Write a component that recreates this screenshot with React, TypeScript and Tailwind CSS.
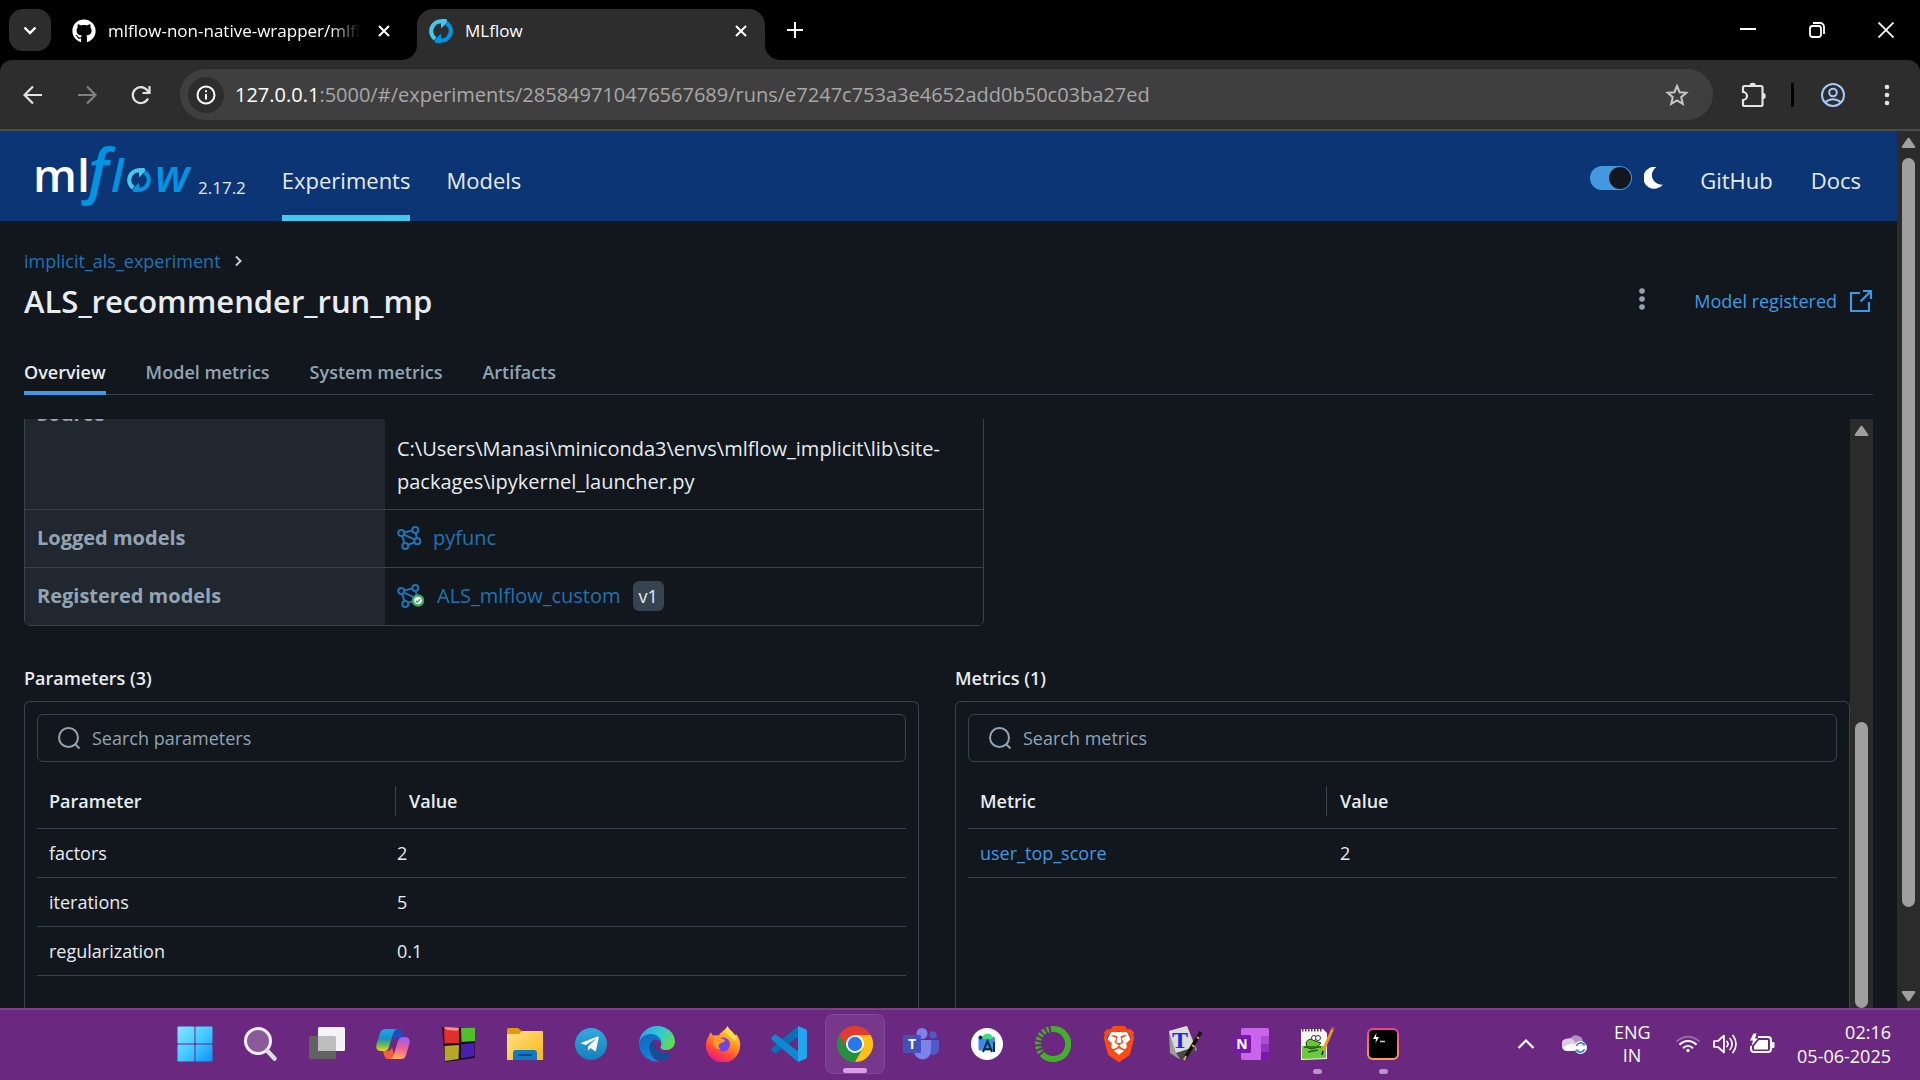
import React from "react";
import { FaGithub, FaTelegramPlane } from "react-icons/fa";
import { SiBrave } from "react-icons/si";

type IconProps = { className?: string };

/* ---------- shared marks ---------- */

/* Two half rings, each ending in an arrow head, in a 24 unit box. */
function RingShapes() {
  return (
    <g fill="none" strokeWidth="4.200">
      <path d="M6.200 19.800A9.700 9.700 0 0 1 12.500 2.300" stroke="#43c9ed" />
      <path d="M12 0h5.500l1 3-6.500 6.500z" fill="#43c9ed" />
      <path d="M17.800 4.200A9.700 9.700 0 0 1 11.500 21.700" stroke="#0194e2" />
      <path d="M12 24H6.500l-1-3 6.500-6.500z" fill="#0194e2" />
    </g>
  );
}

function FlowRing({ className }: IconProps) {
  return (
    <svg viewBox="0 0 24 24" className={className} aria-hidden="true">
      <RingShapes />
    </svg>
  );
}

function MlflowLogo() {
  return (
    <svg width="162" height="68" viewBox="0 0 162 68" className="overflow-visible" role="img" aria-label="mlflow">
      <g fontFamily="'Open Sans', sans-serif" fontWeight="600">
        <text x="-3" y="50" fontSize="46" fill="#fff">ml</text>
        <g fill="#0194e2" fontStyle="italic">
          <text x="52" y="50" fontSize="60">f</text>
          <text x="75" y="50" fontSize="46">l</text>
          <text x="119" y="50" fontSize="46">w</text>
        </g>
      </g>
      <g transform="translate(91 26)">
        <RingShapes />
      </g>
    </svg>
  );
}

function ModelIcon({ registered }: { registered?: boolean }) {
  return (
    <svg width="28" height="24" viewBox="0 0 28 24" fill="none" className="shrink-0 overflow-visible" aria-hidden="true">
      <g stroke="#2272b4" strokeWidth="2">
        <circle cx="4.300" cy="7" r="3" />
        <circle cx="18.300" cy="4" r="3" />
        <circle cx="20.300" cy="15.300" r="3" />
        <circle cx="8.300" cy="20" r="3" />
        <path d="M7.200 6.400 15.400 4.600M18.800 7l1 5.300M5.200 9.900l2.200 7.200M11 18.900l6.600-2.600M6.900 8.600l11 5" />
      </g>
      {registered && (
        <g>
          <circle cx="21" cy="16.500" r="5" fill="#fff" stroke="#3caa60" strokeWidth="2.400" />
          <path d="m18.800 16.800 1.400 1.400 3-3" stroke="#3caa60" strokeWidth="1.600" />
        </g>
      )}
    </svg>
  );
}

function SearchIcon() {
  return (
    <svg width="24" height="24" viewBox="0 0 24 24" fill="none" stroke="#92a4b3" strokeWidth="2" aria-hidden="true">
      <circle cx="11.500" cy="11.500" r="9.500" />
      <path d="m18 18 4.500 4.500" />
    </svg>
  );
}

/* ---------- browser chrome ---------- */

function CloseIcon() {
  return (
    <svg width="12" height="12" viewBox="0 0 12 12" stroke="#fff" strokeWidth="2" aria-hidden="true">
      <path d="m1 1 10 10M11 1 1 11" />
    </svg>
  );
}

function TabStrip() {
  return (
    <div className="flex h-[60px] shrink-0 items-end bg-black text-[17px] text-white">
      <button aria-label="Search tabs" className="mb-[9px] ml-[9px] flex h-[42px] w-[42px] items-center justify-center rounded-[14px] bg-[#2d2d2d]">
        <svg width="14" height="9" viewBox="0 0 14 9" fill="none" stroke="#fff" strokeWidth="2.400"><path d="m1.500 1.500 5.500 5.500 5.500-5.500" /></svg>
      </button>
      <div className="flex h-[51px] w-[366px] items-center pr-[27px] pb-2 pl-[21px]">
        <FaGithub className="size-6 shrink-0" />
        <span className="ml-3 w-[252px] overflow-hidden whitespace-nowrap [mask-image:linear-gradient(to_right,black_88%,transparent)]">mlflow-non-native-wrapper/mlflow</span>
        <button aria-label="Close tab" className="ml-auto"><CloseIcon /></button>
      </div>
      <div className="relative flex h-[51px] w-[348px] items-center rounded-t-2xl bg-[#2d2d2d] px-3 pb-2">
        <svg width="15" height="15" viewBox="0 0 15 15" className="absolute bottom-0 -left-[15px]" aria-hidden="true"><path d="M15 0v15H0A15 15 0 0 0 15 0z" fill="#2d2d2d" /></svg>
        <svg width="15" height="15" viewBox="0 0 15 15" className="absolute -right-[15px] bottom-0" aria-hidden="true"><path d="M0 0v15h15A15 15 0 0 1 0 0z" fill="#2d2d2d" /></svg>
        <FlowRing className="size-6" />
        <span className="ml-3">MLflow</span>
        <button aria-label="Close tab" className="mr-1.5 ml-auto"><CloseIcon /></button>
      </div>
      <button aria-label="New tab" className="mb-[22px] ml-[22px]">
        <svg width="16" height="16" viewBox="0 0 16 16" stroke="#fff" strokeWidth="2"><path d="M8 0v16M0 8h16" /></svg>
      </button>
      <div className="ml-auto flex h-full">
        <button aria-label="Minimize" className="flex w-[69px] items-center justify-center">
          <svg width="16" height="16" viewBox="0 0 16 16" stroke="#fff" strokeWidth="2"><path d="M0 7h16" /></svg>
        </button>
        <button aria-label="Restore" className="flex w-[69px] items-center justify-center">
          <svg width="16" height="16" viewBox="0 0 16 16" fill="none" stroke="#fff" strokeWidth="1.800"><rect x="1" y="4" width="11" height="11" rx="2.500" /><path d="M4 1h7a4 4 0 0 1 4 4v7" /></svg>
        </button>
        <button aria-label="Close" className="flex w-[69px] items-center justify-center">
          <svg width="16" height="16" viewBox="0 0 16 16" stroke="#fff" strokeWidth="1.800"><path d="m.5.5 15 15M15.500.5l-15 15" /></svg>
        </button>
      </div>
    </div>
  );
}

function AddressBar() {
  return (
    <div className="shrink-0 bg-black">
      <div className="flex h-[71px] items-center rounded-t-xl border-b-2 border-[#4c4c4c] bg-[#2d2d2d] text-[#dedede]">
        <div className="flex w-[180px] items-center gap-[34px] pl-[23px]">
          <button aria-label="Back"><svg width="20" height="20" viewBox="0 0 20 20" fill="none" stroke="#e3e3e3" strokeWidth="2.200"><path d="M19 10H2M10 1.500 1.500 10l8.500 8.500" /></svg></button>
          <button aria-label="Forward"><svg width="20" height="20" viewBox="0 0 20 20" fill="none" stroke="#808080" strokeWidth="2.200"><path d="M1 10h17M10 1.500l8.500 8.500-8.500 8.500" /></svg></button>
          <button aria-label="Reload"><svg width="20" height="20" viewBox="0 0 20 20" fill="none" stroke="#e3e3e3" strokeWidth="2.200"><path d="M17 13.500A8 8 0 1 1 16 5l2 2.500" /><path d="M18.500 1v7h-7" /></svg></button>
        </div>
        <div className="flex h-[51px] flex-1 items-center rounded-full bg-[#3f3f3f] pr-6 pl-2">
          <button aria-label="Site information" className="flex size-9 items-center justify-center rounded-full bg-[#2d2d2d]">
            <svg width="20" height="20" viewBox="0 0 20 20" fill="none" stroke="#fff" strokeWidth="2"><circle cx="10" cy="10" r="8.500" /><path d="M10 9v5.500M10 5.200v2" /></svg>
          </button>
          <div className="ml-[11px] flex-1 text-xl whitespace-nowrap text-[#a8a8a8]"><span className="text-white">127.0.0.1</span>:5000/#/experiments/285849710476567689/runs/e7247c753a3e4652add0b50c03ba27ed</div>
          <button aria-label="Bookmark this page">
            <svg width="24" height="24" viewBox="0 0 24 24" fill="none" stroke="#c7c7c7" strokeWidth="2"><path d="m12 3 2.600 6.200 6.700.6-5.100 4.400 1.600 6.600L12 17.300l-5.800 3.500 1.600-6.600-5.100-4.400 6.700-.6z" /></svg>
          </button>
        </div>
        <div className="flex w-[207px] items-center">
          <button aria-label="Extensions" className="ml-7">
            <svg width="26" height="26" viewBox="0 0 26 26" fill="none" stroke="#e3e3e3" strokeWidth="2.200"><path d="M2 5.500A1.500 1.500 0 0 1 3.500 4H20a1.500 1.500 0 0 1 1.500 1.500v17A1.500 1.500 0 0 1 20 24H3.500A1.500 1.500 0 0 1 2 22.500V18a4 4 0 0 0 0-8z" /><path d="M8.500 4a3.200 3.200 0 0 1 6.400 0zM21.500 10.800a3.200 3.200 0 0 1 0 6.400z" fill="#e3e3e3" stroke="none" /></svg>
          </button>
          <span className="ml-6 h-6 w-[3px] bg-black" />
          <button aria-label="Profile" className="ml-[26px]">
            <svg width="26" height="26" viewBox="0 0 26 26" fill="none" stroke="#a8c7fa" strokeWidth="2"><circle cx="13" cy="13" r="11" /><circle cx="13" cy="10.500" r="3.800" /><path d="M5 20.500c4.500-4.500 11.500-4.500 16 0" /></svg>
          </button>
          <button aria-label="Chrome menu" className="ml-[38px]">
            <svg width="6" height="22" viewBox="0 0 6 22" fill="#e3e3e3"><circle cx="3" cy="3" r="2.300" /><circle cx="3" cy="11" r="2.300" /><circle cx="3" cy="19" r="2.300" /></svg>
          </button>
        </div>
      </div>
    </div>
  );
}

/* ---------- MLflow page ---------- */

function AppHeader() {
  return (
    <header className="flex h-[90px] shrink-0 items-stretch bg-[#0b3574] pr-9 pl-9 text-[22px] text-[#e8ecf0]">
      <a href="#home" className="flex items-center">
        <MlflowLogo />
        <span className="mt-6 text-[17px]">2.17.2</span>
      </a>
      <nav className="ml-9 flex gap-9">
        <a href="#experiments" className="flex items-center border-b-[6px] border-[#43c9ed] pt-3.5">Experiments</a>
        <a href="#models" className="flex items-center border-b-[6px] border-transparent pt-3.5">Models</a>
      </nav>
      <div className="ml-auto flex items-center pt-2">
        <button role="switch" aria-checked="true" aria-label="Dark mode" className="mb-1 flex h-6 w-[42px] items-center justify-end rounded-full bg-[#4299e0] pr-px">
          <span className="size-[22px] rounded-full bg-[#11171d]" />
        </button>
        <svg width="20" height="22" viewBox="0 0 20 22" className="mb-1 ml-3" aria-hidden="true"><path d="M12.500 0A11 11 0 1 0 19 17.500 9.500 9.500 0 0 1 12.500 0z" fill="#fff" /></svg>
        <a href="#github" className="ml-9">GitHub</a>
        <a href="#docs" className="ml-[38px]">Docs</a>
      </div>
    </header>
  );
}

function ScrollArrow({ down }: { down?: boolean }) {
  return (
    <svg width="15" height="12" viewBox="0 0 15 12" className={down ? "rotate-180" : ""} aria-hidden="true">
      <path d="M6.300 1.500a1.500 1.500 0 0 1 2.400 0l5.500 8a1 1 0 0 1-.9 1.500H1.700a1 1 0 0 1-.9-1.500z" fill="#9f9f9f" />
    </svg>
  );
}

function RunHeader() {
  return (
    <div className="shrink-0">
      <div className="flex items-center gap-3.5 text-lg leading-6 text-[#2272b4]">
        <a href="#experiment">implicit_als_experiment</a>
        <svg width="7" height="12" viewBox="0 0 7 12" fill="none" stroke="#c0cdd8" strokeWidth="2" aria-hidden="true"><path d="m1 1.500 4.500 4.500L1 10.500" /></svg>
      </div>
      <div className="mt-1 flex h-12 items-center">
        <h1 className="text-[31px] leading-10 font-semibold text-[#e8ecf0]">ALS_recommender_run_mp</h1>
        <button aria-label="Run actions" className="mr-[49px] mb-1 ml-auto">
          <svg width="6" height="22" viewBox="0 0 6 22" fill="#92a4b3"><circle cx="3" cy="3" r="2.800" /><circle cx="3" cy="11" r="2.800" /><circle cx="3" cy="19" r="2.800" /></svg>
        </button>
        <a href="#registered" className="flex items-center gap-3 text-lg text-[#4299e0]">
          Model registered
          <svg width="24" height="24" viewBox="0 0 24 24" fill="none" stroke="#4299e0" strokeWidth="2.200" aria-hidden="true"><path d="M11 4H2v18h18v-9M14 2h8v8M22 2 11.500 12.500" /></svg>
        </a>
      </div>
      <nav className="mt-[30px] flex gap-10 border-b border-[#37444f] text-lg font-semibold text-[#92a4b3]">
        <a href="#overview" className="-mb-px border-b-4 border-[#4299e0] pt-[5px] pb-[7px] leading-6 text-[#e8ecf0]">Overview</a>
        <a href="#model-metrics" className="pt-[5px] leading-6">Model metrics</a>
        <a href="#system-metrics" className="pt-[5px] leading-6">System metrics</a>
        <a href="#artifacts" className="pt-[5px] leading-6">Artifacts</a>
      </nav>
    </div>
  );
}

function DetailRow({ label, children }: { label: string; children: React.ReactNode }) {
  return (
    <tr className="h-[58px] border-b border-[#37444f]">
      <th scope="row" className="w-[360px] bg-[#20272e] px-3 text-left font-bold text-[#92a4b3]">{label}</th>
      <td className="px-3">{children}</td>
    </tr>
  );
}

function RunDetails() {
  return (
    <div className="-mt-6 w-[960px] shrink-0 overflow-hidden rounded-md border border-b-0 border-[#37444f]">
      <table className="w-full border-collapse text-xl">
        <tbody>
          <tr className="h-[113px] border-b border-[#37444f]">
            <th scope="row" className="w-[360px] bg-[#20272e] px-3 pt-1 text-left align-top leading-7 font-bold text-[#92a4b3]">Source</th>
            <td className="px-3 pt-9 align-top leading-[33px] text-[#e8ecf0]">C:\Users\Manasi\miniconda3\envs\mlflow_implicit\lib\site-<br />packages\ipykernel_launcher.py</td>
          </tr>
          <DetailRow label="Logged models">
            <a href="#pyfunc" className="flex items-center gap-2 text-[#2272b4]"><ModelIcon />pyfunc</a>
          </DetailRow>
          <DetailRow label="Registered models">
            <span className="flex items-center gap-3">
              <a href="#model" className="flex items-center gap-3 text-[#2272b4]"><ModelIcon registered />ALS_mlflow_custom</a>
              <span className="rounded-md bg-[#37444f] px-1.5 text-lg leading-[30px] text-[#e8ecf0]">v1</span>
            </span>
          </DetailRow>
        </tbody>
      </table>
    </div>
  );
}

type Entry = { name: string; value: string; link?: boolean };

function DataCard({ title, column, placeholder, rows }: { title: string; column: string; placeholder: string; rows: Entry[] }) {
  return (
    <section className="flex min-w-0 flex-1 flex-col">
      <h2 className="text-lg leading-[30px] font-semibold text-[#e8ecf0]">{title}</h2>
      <div className="mt-2 flex-1 rounded-t-md border border-b-0 border-[#37444f] p-3 text-lg leading-6 text-[#e8ecf0]">
        <label className="flex h-12 items-center gap-[11px] rounded-md border border-[#37444f] px-[19px]">
          <SearchIcon />
          <input type="text" aria-label={placeholder} placeholder={placeholder} className="min-w-0 flex-1 bg-transparent outline-none placeholder:text-[#92a4b3]" />
        </label>
        <table className="mt-[13px] w-full table-fixed border-collapse">
          <thead>
            <tr className="h-[54px] border-b border-[#37444f] text-left">
              <th scope="col" className="w-[347px] px-3 font-semibold">{column}</th>
              <th scope="col" className="pl-[11px] font-semibold"><span className="block border-l border-[#37444f] pl-[13px] leading-[30px]">Value</span></th>
            </tr>
          </thead>
          <tbody>
            {rows.map((row) => (
              <tr key={row.name} className="h-[49px] border-b border-[#37444f]">
                <td className="px-3">{row.link ? <a href="#metric" className="text-[#4299e0]">{row.name}</a> : row.name}</td>
                <td className={row.link ? "pl-[25px]" : "pl-[13px]"}>{row.value}</td>
              </tr>
            ))}
          </tbody>
        </table>
      </div>
    </section>
  );
}

function RunPage() {
  return (
    <main className="flex min-h-0 flex-1 flex-col px-6 pt-7">
      <RunHeader />
      <div className="mt-6 flex min-h-0 flex-1">
        <div className="flex min-w-0 flex-1 flex-col overflow-hidden">
          <RunDetails />
          <div className="mt-[37px] flex flex-1 gap-9">
            <DataCard title="Parameters (3)" column="Parameter" placeholder="Search parameters" rows={[{ name: "factors", value: "2" }, { name: "iterations", value: "5" }, { name: "regularization", value: "0.1" }]} />
            <DataCard title="Metrics (1)" column="Metric" placeholder="Search metrics" rows={[{ name: "user_top_score", value: "2", link: true }]} />
          </div>
        </div>
        <div className="flex w-[23px] shrink-0 flex-col items-center justify-between bg-[#2b2b2b] pt-1.5">
          <ScrollArrow />
          <div className="h-[49%] w-[13px] rounded-full bg-[#9f9f9f]" />
        </div>
      </div>
    </main>
  );
}

/* ---------- taskbar ---------- */

function StartIcon() {
  return (
    <svg width="36" height="36" viewBox="0 0 36 36">
      <defs><linearGradient id="start" gradientUnits="userSpaceOnUse" x1="0" y1="0" x2="36" y2="36"><stop stopColor="#8ae3ff" /><stop offset=".5" stopColor="#45cbff" /><stop offset="1" stopColor="#0a90f8" /></linearGradient></defs>
      <g fill="url(#start)"><rect x=".5" y=".5" width="17" height="17" rx="1" /><rect x="18.500" y=".5" width="17" height="17" rx="1" /><rect x=".5" y="18.500" width="17" height="17" rx="1" /><rect x="18.500" y="18.500" width="17" height="17" rx="1" /></g>
    </svg>
  );
}

function FindIcon() {
  return (
    <svg width="36" height="36" viewBox="0 0 36 36" fill="none">
      <circle cx="15" cy="15" r="12.500" fill="#8a5a9b" stroke="#f2f0f3" strokeWidth="3" />
      <path d="m24 24.500 7.500 8" stroke="#d9dce2" strokeWidth="4.500" strokeLinecap="round" />
    </svg>
  );
}

function TaskViewIcon() {
  return (
    <svg width="36" height="36" viewBox="0 0 36 36">
      <rect x="0" y="10" width="27" height="23" rx="1.500" fill="#626262" />
      <rect x="9" y="1" width="27" height="24" rx="1.500" fill="#f4f4f4" />
      <path d="M9 10h16.500a1.500 1.500 0 0 1 1.500 1.500V25H10.500A1.500 1.500 0 0 1 9 23.500z" fill="#bdbdbd" />
    </svg>
  );
}

function CopilotIcon() {
  return (
    <svg width="36" height="36" viewBox="0 0 36 36">
      <defs>
        <linearGradient id="cpA" x1=".3" y1="0" x2=".3" y2="1"><stop stopColor="#18a6f0" /><stop offset=".45" stopColor="#1d8fb8" /><stop offset=".75" stopColor="#6fbf50" /><stop offset="1" stopColor="#f5d90a" /></linearGradient>
        <linearGradient id="cpB" x1=".6" y1="0" x2=".4" y2="1"><stop stopColor="#9b5cf0" /><stop offset=".5" stopColor="#ef5f95" /><stop offset="1" stopColor="#ffb35c" /></linearGradient>
      </defs>
      <path d="M16 3h7c2 0 3 1 3.600 3l1.500 5h-4c-3 0-4 1-5 4z" fill="#1b4fc4" />
      <path d="M20 33h-7c-2 0-3-1-3.500-3L8 25h4c3 0 4-1 5-4z" fill="#f4603a" />
      <path d="M10 3h13c-3 0-4 2-5 5l-4 13c-1 3-2.500 4-5 4H6c-4 0-5.500-3-4.400-7L5 7c1-3 2.500-4 5-4z" fill="url(#cpA)" />
      <path d="M26 33H14c3 0 4-2 5-5l4-13c1-3 2.500-4 5-4h2c4 0 5.500 3 4.400 7L31 29c-1 3-2.500 4-5 4z" fill="url(#cpB)" />
    </svg>
  );
}

function BlocksIcon() {
  return (
    <svg width="36" height="36" viewBox="0 0 36 36">
      <path d="M1 1 34 1.500V32L4 36z" fill="#1b0d20" />
      <path d="m3 1 15 .8V17L3.500 17.500z" fill="#e0302b" /><path d="m3 1 15 .8-1.500 3L6 4z" fill="#f5948e" />
      <path d="M20 1.800 34 1.500V15l-13.500 1z" fill="#4fc02c" />
      <path d="M3.500 20 18 19l-.5 14L4 35z" fill="#b8a824" /><path d="M20 18.500 33.500 17v13L20 32.500z" fill="#4b1fae" />
    </svg>
  );
}

function ExplorerIcon() {
  return (
    <svg width="36" height="36" viewBox="0 0 36 36">
      <defs><linearGradient id="folder" x1="0" y1="0" x2="1" y2="1"><stop stopColor="#ffe08a" /><stop offset="1" stopColor="#f9b80f" /></linearGradient></defs>
      <path d="M0 3.500A1.500 1.500 0 0 1 1.500 2H11l5 4-3 5H0z" fill="#dd9a09" />
      <path d="M0 8h12l3-3h20a1 1 0 0 1 1 1v28H0z" fill="url(#folder)" />
      <path d="M6 34v-7a3 3 0 0 1 3-3h18a3 3 0 0 1 3 3v7z" fill="#1279c4" />
      <path d="M11 29h14" stroke="#0a4c86" strokeWidth="2" />
    </svg>
  );
}

function TelegramIcon() {
  return (
    <span className="flex size-8 items-center justify-center rounded-full bg-gradient-to-b from-[#34a9e2] to-[#1480b9] text-white">
      <FaTelegramPlane className="mr-0.5 size-5" />
    </span>
  );
}

function EdgeIcon() {
  return (
    <svg width="36" height="36" viewBox="0 0 36 36">
      <defs>
        <linearGradient id="edA" x1="0" y1=".3" x2="1" y2=".7"><stop stopColor="#2aa5e8" /><stop offset=".5" stopColor="#33c8d0" /><stop offset="1" stopColor="#65dd4a" /></linearGradient>
        <linearGradient id="edB" x1="0" y1="0" x2=".5" y2="1"><stop stopColor="#0f67b8" /><stop offset="1" stopColor="#0d86e0" /></linearGradient>
      </defs>
      <path d="M0 18A18 18 0 0 1 18 0c10 0 18 7 18 15.500 0 5-4 8.500-9 8.500-4 0-6-1.500-5.500-3 1.500-2 1-6-1-8.500C15 6.500 4 8 0 18z" fill="url(#edA)" />
      <path d="M0 18C1 11 6 8 12 8c6 0 10 4 10.500 9-1-2-3-3.500-5.500-3.500-4 0-6.500 4-6.500 8.500 0 7 5 12 10 13.500A18 18 0 0 1 0 18z" fill="url(#edB)" />
      <path d="M14.500 14.500c-5 3-5 10-1 14.500 3 3.500 7 5.500 11 5.500 4-1.500 7-4.500 9-8-4 2-9 2-12.500-.5-5-3-7-7.500-6.500-11.500z" fill="#134f96" />
    </svg>
  );
}

function FirefoxIcon() {
  return (
    <svg width="36" height="36" viewBox="0 0 36 36">
      <defs>
        <linearGradient id="fx" x1=".8" y1="0" x2=".3" y2="1"><stop stopColor="#fff04a" /><stop offset=".4" stopColor="#ff9a20" /><stop offset=".75" stopColor="#ff4140" /><stop offset="1" stopColor="#e3158a" /></linearGradient>
      </defs>
      <path d="M6 6c.5 1.500 1 2.500 2 3.500 2-.5 4-.5 6 0C15 6 20 5 22.500 0c2 4.500 5 5 7 9l2-.5c3 4 4 8 3.500 12A17 17 0 0 1 1 19c0-3.500 1-6 2.500-8C4 9 5 7.500 6 6z" fill="url(#fx)" />
      <circle cx="18" cy="18.500" r="7" fill="#7542e5" />
      <path d="M8 11c3-2 7-1 9 2 2 0 3 .5 3 2-1 1.500-4 1.500-6 3.500-1 2 0 4 2 5-4 0-7-2-8-5.500z" fill="#ff9a2a" />
      <path d="M22.500 0c2 5 7 6 9 13l-2.500 2c-2-5-7-5-8-9z" fill="#ffe14a" />
    </svg>
  );
}

function CodeIcon() {
  return (
    <svg width="36" height="36" viewBox="0 0 36 36">
      <path d="M27 0v10.500L5.500 27c-1.500 1-2.500 0-4-1.500-1.500-1-1.500-2.500 0-4z" fill="#0b6fb3" />
      <path d="M27 36V25.500L5.500 9c-1.500-1-2.500 0-4 1.500-1.500 1-1.500 2.500 0 4z" fill="#0f88d2" />
      <path d="m27 0 8 3.500c.7.300 1 1 1 1.500v26c0 .6-.3 1.200-1 1.500L27 36z" fill="#25a5ef" />
    </svg>
  );
}

function ChromeIcon() {
  return (
    <svg width="36" height="36" viewBox="0 0 36 36">
      <circle cx="18" cy="18" r="18" fill="#e33b2e" />
      <path d="M2.400 9 10.200 22.500 18 27v9A18 18 0 0 1 2.400 9z" fill="#23913f" />
      <path d="M25.800 22.500 18 36l-7-13z" fill="#23913f" />
      <path d="M25.800 22.500 18 36a18 18 0 0 0 15.600-27H18z" fill="#fbc116" />
      <circle cx="18" cy="18" r="9" fill="#fff" /><circle cx="18" cy="18" r="7.200" fill="#2878ea" />
    </svg>
  );
}

function TeamsIcon() {
  return (
    <svg width="36" height="36" viewBox="0 0 36 36">
      <circle cx="30" cy="9" r="3.800" fill="#5059c9" /><path d="M26 14h10v9a6 6 0 0 1-8 5.500z" fill="#5059c9" />
      <circle cx="19" cy="7.500" r="5.500" fill="#7b83eb" /><path d="M11 14h17v11a8.500 8.500 0 0 1-17 0z" fill="#7b83eb" />
      <rect x="0" y="9" width="18" height="18" rx="1.500" fill="#4550bd" />
      <text x="9" y="23" textAnchor="middle" fontSize="14" fontWeight="700" fontFamily="'Open Sans', sans-serif" fill="#fff">T</text>
    </svg>
  );
}

function StudioIcon() {
  return (
    <svg width="36" height="36" viewBox="0 0 36 36">
      <circle cx="18" cy="18" r="16" fill="#fff" />
      <rect x="9.500" y="11" width="16.500" height="13.500" rx="1.500" fill="#4285f4" />
      <path d="M13 13a5.500 5.500 0 0 1 11 0z" fill="#3ddc84" /><circle cx="11.500" cy="11.500" r="2" fill="#073042" />
      <path d="m14 26 4.500-11L23 26M15.500 22.500c2 1 4 1 6 0" fill="none" stroke="#073042" strokeWidth="2" /><path d="M25 16v10" stroke="#073042" strokeWidth="2" />
    </svg>
  );
}

function AnacondaIcon() {
  return (
    <svg width="36" height="36" viewBox="0 0 36 36" fill="none" stroke="#43b02a" strokeWidth="6">
      <path d="M16 3.200A15 15 0 1 1 7 28" />
      <path d="M14 3.500A15 15 0 0 0 6 27" strokeDasharray="2.500 1.800" />
      <path d="M13 6.500A13 13 0 0 0 6.500 25" stroke="#6a2880" strokeWidth="1" strokeDasharray="2 2" />
    </svg>
  );
}

function BraveIcon() {
  return (
    <span className="relative flex size-9 items-center justify-center">
      <svg width="32" height="36" viewBox="0 0 32 36" className="absolute"><path d="M8 6h16l4 8-5 14-7 5-7-5L4 14z" fill="#fff" /></svg>
      <SiBrave className="relative size-9 text-[#fb4b14]" />
    </span>
  );
}

function WriterIcon() {
  return (
    <svg width="36" height="36" viewBox="0 0 36 36">
      <path d="m2 5 18-5 10 24-18 9-9-6z" fill="#9c9c9c" /><path d="m2 5 18-5 8 21-19 6z" fill="#dcdcdc" /><path d="m9 27 19-6v5l-15 7z" fill="#4a4a4a" />
      <text x="13" y="22" textAnchor="middle" fontSize="24" fontWeight="700" fontFamily="'Liberation Serif', serif" fill="#1a2bdc">T</text>
      <path d="m34 6-16 26" stroke="#17120a" strokeWidth="3.500" /><path d="m30 11 2 1.500M25 19l2 1.500M19 30l-2 4" stroke="#d2ae52" strokeWidth="2" />
    </svg>
  );
}

function OneNoteIcon() {
  return (
    <svg width="36" height="36" viewBox="0 0 36 36">
      <rect x="8" y="2" width="28" height="32" rx="2" fill="#ca64ea" /><path d="M28 10h8v8h-8z" fill="#ae4bd5" /><path d="M28 18h8v8h-8z" fill="#9332bf" /><path d="M28 26h8v6a2 2 0 0 1-2 2h-6z" fill="#7719aa" />
      <rect x="0" y="9" width="18" height="18" rx="1.500" fill="#7719aa" />
      <text x="9" y="23" textAnchor="middle" fontSize="14" fontWeight="700" fontFamily="'Open Sans', sans-serif" fill="#fff">N</text>
    </svg>
  );
}

function NotepadIcon() {
  return (
    <svg width="36" height="36" viewBox="0 0 36 36">
      <path d="M2 3h22l4 4v26L2 34z" fill="#f6f6f2" /><path d="M3 20h24v12L3 33z" fill="#6cc93e" />
      <path d="M3 4h20" stroke="#444" strokeWidth="3" strokeDasharray="1.500 1.500" />
      <path d="M7 17c1-4 6-5 9-2l6 2-3 3c-3 3-8 4-11 1z" fill="#68c92c" stroke="#1c3d10" /><circle cx="15" cy="12" r="2.500" fill="#fff" stroke="#333" /><circle cx="19" cy="12" r="2.500" fill="#fff" stroke="#333" />
      <path d="M5 21h17M9 26l10-2" stroke="#1c5c1c" strokeWidth="1.500" />
      <path d="M34 2 24 25" stroke="#e89a1c" strokeWidth="3" /><path d="m24 25-1 4" stroke="#222" strokeWidth="1.500" /><path d="m34.500 1-1 2.500" stroke="#b8435c" strokeWidth="3" />
    </svg>
  );
}

function TerminalIcon() {
  return (
    <svg width="36" height="36" viewBox="0 0 36 36">
      <defs><linearGradient id="term" x1="0" y1="0" x2="0" y2="1"><stop stopColor="#f0409a" /><stop offset="1" stopColor="#f9a34a" /></linearGradient></defs>
      <rect x="3" y="3" width="30" height="30" rx="5" fill="#000" stroke="url(#term)" strokeWidth="2" />
      <path d="M11.500 7 8 13h3l-.5 4L14 11h-3z" fill="#fff" /><path d="M15 15.500h5" stroke="#ccc" strokeWidth="1.500" />
    </svg>
  );
}

type TaskApp = { name: string; icon: React.ReactNode; state?: "active" | "open" };

const apps: TaskApp[] = [
  { name: "Start", icon: <StartIcon /> },
  { name: "Search", icon: <FindIcon /> },
  { name: "Task view", icon: <TaskViewIcon /> },
  { name: "Copilot", icon: <CopilotIcon /> },
  { name: "Blocks", icon: <BlocksIcon /> },
  { name: "File Explorer", icon: <ExplorerIcon /> },
  { name: "Telegram", icon: <TelegramIcon /> },
  { name: "Edge", icon: <EdgeIcon /> },
  { name: "Firefox", icon: <FirefoxIcon /> },
  { name: "Visual Studio Code", icon: <CodeIcon /> },
  { name: "Chrome", icon: <ChromeIcon />, state: "active" },
  { name: "Teams", icon: <TeamsIcon /> },
  { name: "Android Studio", icon: <StudioIcon /> },
  { name: "Anaconda", icon: <AnacondaIcon /> },
  { name: "Brave", icon: <BraveIcon /> },
  { name: "Text editor", icon: <WriterIcon /> },
  { name: "OneNote", icon: <OneNoteIcon /> },
  { name: "Notepad++", icon: <NotepadIcon />, state: "open" },
  { name: "Terminal", icon: <TerminalIcon />, state: "open" },
];

function TaskButton({ app }: { app: TaskApp }) {
  const active = app.state === "active";
  return (
    <button
      aria-label={app.name}
      className={
        active
          ? "relative flex size-[60px] items-center justify-center rounded-lg border border-[#804a93] bg-[#75388a]"
          : "relative flex size-[60px] items-center justify-center"
      }
    >
      {app.icon}
      {app.state && (
        <span className={active ? "absolute bottom-0 h-[5px] w-6 rounded-full bg-[#dc9ce6]" : "absolute bottom-0 h-[5px] w-[9px] rounded-full bg-[#b995c6]"} />
      )}
    </button>
  );
}

function Tray() {
  return (
    <div className="ml-auto flex items-center pr-[29px] text-white">
      <button aria-label="Show hidden icons">
        <svg width="18" height="12" viewBox="0 0 18 12" fill="none" stroke="#fff" strokeWidth="2.200"><path d="m1.500 10 7.500-7.500 7.500 7.500" /></svg>
      </button>
      <button aria-label="OneDrive" className="ml-[27px]">
        <svg width="26" height="22" viewBox="0 0 26 22" fill="none">
          <path d="M8 6a7 7 0 0 1 13 2l-6 7H8z" fill="#b48fc2" /><path d="M5.500 5.500a6 6 0 0 1 6 1.500l6 8-5 3H5.500a5.500 5.500 0 0 1 0-12.500z" fill="#dccbe3" /><path d="M1 15c3-3 8-5 11-4v7H5c-2 0-3.500-1-4-3z" fill="#fff" />
          <circle cx="18.500" cy="14.500" r="6.500" fill="#fff" /><path d="M14.500 13a4.300 4.300 0 0 1 7.500-1.500M22.500 16a4.300 4.300 0 0 1-7.500 1.500" stroke="#1a7ac8" strokeWidth="1.500" /><path d="M20.500 12h2.500V9.500M16.500 17H14v2.500" stroke="#1a7ac8" />
        </svg>
      </button>
      <div className="ml-[26px] w-9 text-center text-lg leading-[23px]">ENG<br />IN</div>
      <div className="ml-[25px] flex items-center gap-3">
        <svg width="26" height="18" viewBox="0 0 26 18" fill="none" stroke="#fff" strokeWidth="2" aria-label="Wi-Fi" role="img"><path d="M1.500 6.500c7-6.500 16-6.500 23 0" opacity=".3" /><path d="M4.500 9.800c5-5 12-5 17 0M8 13.200c3-3 7-3 10 0" /><circle cx="13" cy="15.500" r="1.700" fill="#fff" stroke="none" /></svg>
        <svg width="24" height="20" viewBox="0 0 24 20" fill="none" stroke="#fff" strokeWidth="1.700" strokeLinejoin="round" aria-label="Volume" role="img"><path d="M1 7v6h4l6 5.500V1.500L5 7z" /><path d="M14 7.500c1.200 1.500 1.200 3.500 0 5M17 4.500c2.800 3 2.800 8 0 11M20 1.500c4 5 4 12 0 17" strokeLinecap="round" /></svg>
        <svg width="26" height="22" viewBox="0 0 26 22" fill="none" aria-label="Battery charging" role="img"><path d="M9 4h10a3 3 0 0 1 3 3v9a3 3 0 0 1-3 3H5a3 3 0 0 1-3-3v-3" stroke="#fff" strokeWidth="2" /><path d="M10 7h9v9.500H5V13z" fill="#fff" /><path d="M23.500 9.500h1.500v5h-1.500z" fill="#fff" stroke="#fff" /><path d="M4.500.5 1 7.500h3L2.500 13l6.500-7.500H6L7.500.5z" fill="#fff" /></svg>
      </div>
      <div className="ml-4 w-[100px] text-right text-lg leading-6">02:16<br />05-06-2025</div>
    </div>
  );
}

export default function App() {
  return (
    <div className="flex h-screen flex-col overflow-hidden bg-[#11171d] font-['Open_Sans',sans-serif]">
      <TabStrip />
      <AddressBar />
      <div className="flex min-h-0 flex-1">
        <div className="flex min-w-0 flex-1 flex-col">
          <AppHeader />
          <RunPage />
        </div>
        <div className="flex w-[23px] shrink-0 flex-col items-center bg-[#2b2b2b] py-1.5">
          <ScrollArrow />
          <div className="mt-[9px] w-[13px] flex-[9] rounded-full bg-[#9f9f9f]" />
          <div className="flex-1" />
          <ScrollArrow down />
        </div>
      </div>
      <footer className="flex h-[72px] shrink-0 items-center border-t-2 border-[#7a4189] bg-[#6a2880] pb-0.5 pl-[165px]">
        <div className="flex gap-1.5">
          {apps.map((app) => (
            <TaskButton key={app.name} app={app} />
          ))}
        </div>
        <Tray />
      </footer>
    </div>
  );
}
